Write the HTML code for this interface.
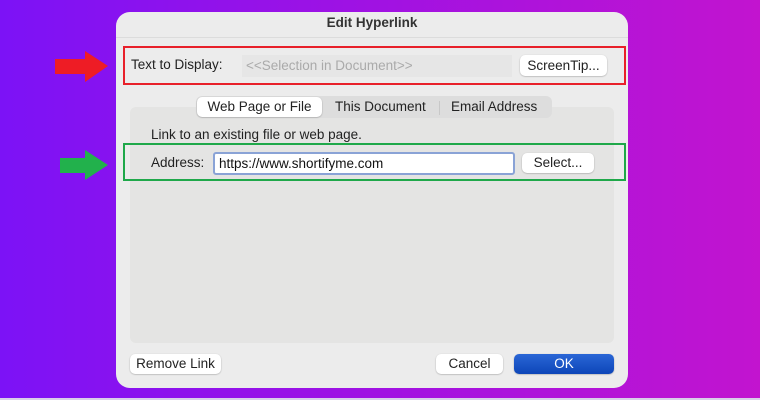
<!DOCTYPE html>
<html><head><style>
*{margin:0;padding:0;box-sizing:border-box}
body{width:760px;height:400px;overflow:hidden;position:relative;background:linear-gradient(90deg,#7c12f6,#9a12e6 40%,#c214cf);font-family:"Liberation Sans",sans-serif;font-size:13.5px;color:#222}
.a{position:absolute;white-space:nowrap}
.dlg{left:116px;top:12px;width:512px;height:376px;background:#ececec;border-radius:14px}
.btn{position:absolute;white-space:nowrap;background:#fff;border-radius:5px;box-shadow:0 0.5px 1.5px rgba(0,0,0,.3);text-align:center;font-size:13.5px;color:#222}
</style></head><body>
<div class="a" style="left:0;top:398px;width:760px;height:2px;background:#d8d0e8"></div>
<div class="a dlg"></div>
<div class="a" style="left:116px;top:15px;width:512px;text-align:center;font-weight:bold;font-size:13.5px;color:#333">Edit Hyperlink</div>
<div class="a" style="left:116px;top:37px;width:512px;height:1px;background:#dcdcdc"></div>
<div class="a" style="left:123px;top:46px;width:503px;height:39px;border:2px solid #e8202a"></div>
<div class="a" style="left:131px;top:57px">Text to Display:</div>
<div class="a" style="left:242px;top:55px;width:270px;height:22px;background:#e6e6e6;color:#aaa;padding:3px 4px">&lt;&lt;Selection in Document&gt;&gt;</div>
<div class="btn" style="left:520px;top:55px;width:87px;height:21px;line-height:21px">ScreenTip...</div>
<div class="a" style="left:130px;top:107px;width:484px;height:236px;background:#e4e4e3;border-radius:6px"></div>
<div class="a" style="left:196px;top:96px;width:356px;height:22px;background:#dddddd;border-radius:6px"></div>
<div class="btn" style="left:197px;top:97px;width:125px;height:20px;line-height:20px">Web Page or File</div>
<div class="a" style="left:335px;top:99px">This Document</div>
<div class="a" style="left:439px;top:101px;width:1px;height:14px;background:#c8c8c8"></div>
<div class="a" style="left:451px;top:99px">Email Address</div>
<div class="a" style="left:151px;top:127px">Link to an existing file or web page.</div>
<div class="a" style="left:123px;top:143px;width:503px;height:38px;border:2px solid #1fa84a"></div>
<div class="a" style="left:151px;top:155px">Address:</div>
<div class="a" style="left:213px;top:152px;width:302px;height:23px;background:#fff;border:2px solid #8aa3d6;border-radius:3px;padding:2px 4px;color:#111">https://www.shortifyme.com</div>
<div class="btn" style="left:522px;top:153px;width:72px;height:20px;line-height:20px">Select...</div>
<div class="btn" style="left:130px;top:354px;width:91px;height:20px;line-height:20px">Remove Link</div>
<div class="btn" style="left:436px;top:354px;width:67px;height:20px;line-height:20px">Cancel</div>
<div class="btn" style="left:514px;top:354px;width:100px;height:20px;line-height:20px;background:linear-gradient(#2a66d6,#0d46b8);color:#fff">OK</div>
<svg class="a" style="left:55px;top:51px" width="55" height="32"><polygon points="0,8 30,8 30,0 53,15 30,31 30,23 0,23" fill="#ee1c25"/></svg>
<svg class="a" style="left:60px;top:150px" width="50" height="32"><polygon points="0,8 25,8 25,0 48,15 25,30 25,23 0,23" fill="#22b14c"/></svg>
</body></html>
